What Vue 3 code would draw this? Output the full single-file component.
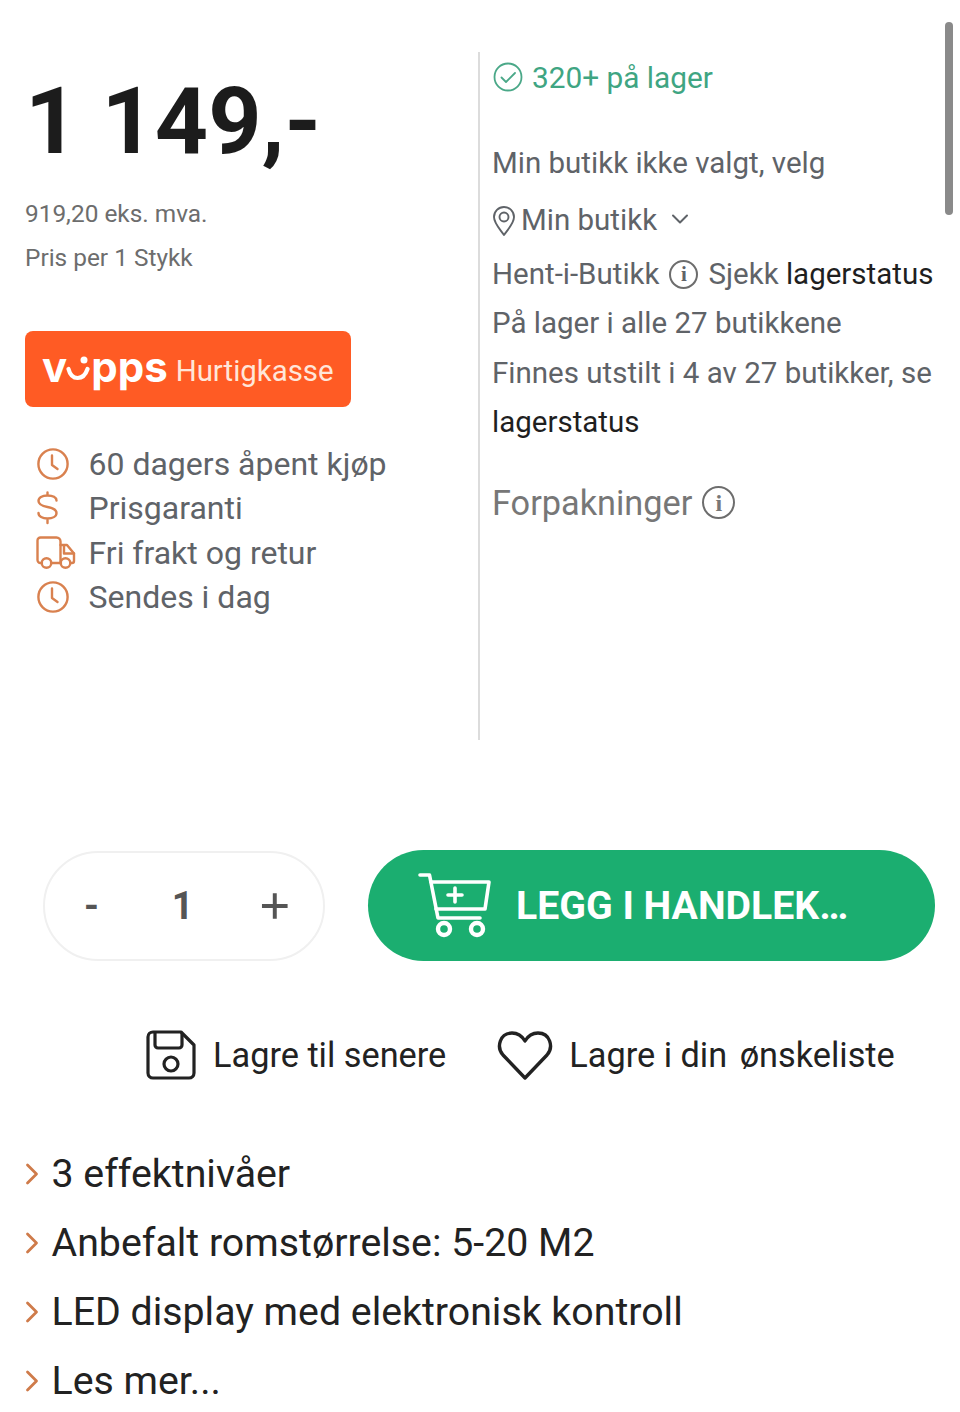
<template>
  <div class="page">
    <div class="scrollbar"></div>

    <section class="top">
      <div class="left">
        <div class="price">1 149,-</div>
        <p class="sub sub--first">919,20 eks. mva.</p>
        <p class="sub">Pris per 1 Stykk</p>

        <button class="vipps" type="button">
          <span class="vipps__logo">v<svg class="vipps__smile" viewBox="0 0 24 26" fill="none"><circle cx="18" cy="4" r="3.500" fill="#fff" /><path d="M2.500 13c3 12 15 12 19 0" stroke="#fff" stroke-width="4.200" stroke-linecap="round" /></svg>pps</span>
          <span class="vipps__text">Hurtigkasse</span>
        </button>

        <ul class="perks">
          <li v-for="perk in perks" :key="perk.label">
            <span class="perks__icon">
              <svg v-if="perk.icon === 'clock'" width="34" height="34" viewBox="0 0 34 34" fill="none" stroke="#d9814f" stroke-width="2.400" stroke-linecap="round" stroke-linejoin="round">
                <circle cx="17" cy="17" r="14.600" />
                <path d="M16 8.500v9.500l5.500 4" />
              </svg>
              <svg v-else-if="perk.icon === 'dollar'" width="34" height="34" viewBox="0 0 34 34" fill="none" stroke="#d9814f" stroke-width="2.400" stroke-linecap="round" stroke-linejoin="round">
                <path d="M20.500 9.500c0-3-3.500-5-9-5s-9 2-9 5.500c0 3.500 3.500 5 9 6 5.500 1 9 2.500 9 6 0 3.500-4 5.500-9 5.500s-9-2-9-5.500M11.500 1.500v3M11.500 27.500v4.500" />
              </svg>
              <svg v-else width="40" height="34" viewBox="0 0 40 34" fill="none" stroke="#d9814f" stroke-width="2.400" stroke-linecap="round" stroke-linejoin="round">
                <path d="M6 27H4.500A3 3 0 0 1 1.500 24V4.500A3 3 0 0 1 4.500 1.500h16A4 4 0 0 1 24.500 5.500V27H15" />
                <path d="M24.500 9h6.500l7 8.500V25a2 2 0 0 1-2 2h-1M24.500 27h.5" />
                <path d="M28 10v7.500h10" />
                <circle cx="10.500" cy="27" r="4.800" />
                <circle cx="29.500" cy="27" r="4.800" />
              </svg>
            </span>
            <span>{{ perk.label }}</span>
          </li>
        </ul>
      </div>

      <div class="right">
        <div class="stock">
          <svg width="30" height="30" viewBox="0 0 30 30" fill="none" stroke="#4aa888" stroke-width="1.800" stroke-linecap="round" stroke-linejoin="round">
            <circle cx="15" cy="15" r="13.500" />
            <path d="M8.500 15.500l4.500 4.500 9-9" />
          </svg>
          <span>320+ på lager</span>
        </div>

        <div class="info">
          <p class="info__first">Min butikk ikke valgt, velg</p>
          <p class="store">
            <svg width="24" height="32" viewBox="0 0 24 32" fill="none" stroke="#5f6368" stroke-width="1.900" stroke-linejoin="round">
              <path d="M12 30C7 23 2 18 2 12a10 10 0 0 1 20 0c0 6-5 11-10 18z" />
              <circle cx="12" cy="12" r="4.500" />
            </svg>
            <span>Min butikk</span>
            <svg class="store__chev" width="20" height="12" viewBox="0 0 20 12" fill="none" stroke="#5f6368" stroke-width="2" stroke-linecap="round" stroke-linejoin="round">
              <path d="M3 2.500l7 7 7-7" />
            </svg>
          </p>
          <p class="pickup">
            <span>Hent-i-Butikk</span>
            <span class="info-icon">i</span>
            <span>Sjekk <span class="dark">lagerstatus</span></span>
          </p>
          <p>På lager i alle 27 butikkene</p>
          <p>Finnes utstilt i 4 av 27 butikker, se</p>
          <p class="dark">lagerstatus</p>
        </div>

        <div class="packs">
          <span>Forpakninger</span>
          <span class="info-icon info-icon--big">i</span>
        </div>
      </div>
    </section>

    <section class="buy">
      <div class="qty">
        <span class="qty__minus">-</span>
        <span class="qty__value">1</span>
        <svg width="30" height="30" viewBox="0 0 30 30" stroke="#555" stroke-width="4">
          <path d="M15 2v26M2 15h26" />
        </svg>
      </div>
      <button class="add" type="button">
        <svg width="74" height="66" viewBox="0 0 74 66" fill="none" stroke="#fff" stroke-width="3.600" stroke-linecap="round" stroke-linejoin="round">
          <path d="M2 2h9.500l8.500 43h42" />
          <path d="M13 9h58l-4 27H18" />
          <path d="M37 15v14M30 22h14" />
          <circle cx="26" cy="56" r="6" stroke-width="4.400" />
          <circle cx="59" cy="56" r="6" stroke-width="4.400" />
        </svg>
        <span>LEGG I HANDLEK…</span>
      </button>
    </section>

    <section class="save">
      <div class="save__item">
        <svg width="50" height="50" viewBox="0 0 50 50" fill="none" stroke="#222" stroke-width="3.200" stroke-linejoin="round">
          <path d="M7 2h28l13 13v28a5 5 0 0 1-5 5H7a5 5 0 0 1-5-5V7a5 5 0 0 1 5-5z" />
          <path d="M9 2v13a3 3 0 0 0 3 3h21a3 3 0 0 0 3-3V3" />
          <circle cx="25" cy="34" r="7" />
        </svg>
        <span>Lagre til senere</span>
      </div>
      <div class="save__item save__item--wish">
        <svg width="56" height="50" viewBox="0 0 56 50" fill="none" stroke="#222" stroke-width="3.400" stroke-linejoin="round">
          <path d="M28 48L6 25C-1 17 3 3 15 3c6 0 10 3 13 8 3-5 7-8 13-8 12 0 16 14 9 22z" />
        </svg>
        <span>Lagre i din <span class="save__gap">ønskeliste</span></span>
      </div>
    </section>

    <ul class="features">
      <li v-for="item in features" :key="item">
        <svg width="14" height="22" viewBox="0 0 14 22" fill="none" stroke="#cf7b4a" stroke-width="2.800" stroke-linecap="round" stroke-linejoin="round">
          <path d="M2.500 2l9 9-9 9" />
        </svg>
        <span>{{ item }}</span>
      </li>
    </ul>
  </div>
</template>

<script setup>
const perks = [
  { icon: "clock", label: "60 dagers åpent kjøp" },
  { icon: "dollar", label: "Prisgaranti" },
  { icon: "truck", label: "Fri frakt og retur" },
  { icon: "clock", label: "Sendes i dag" }
];

const features = [
  "3 effektnivåer",
  "Anbefalt romstørrelse: 5-20 M2",
  "LED display med elektronisk kontroll",
  "Les mer..."
];
</script>

<style>
html,
body {
  margin: 0;
  background: #fff;
}
</style>

<style scoped>
.page {
  position: relative;
  width: 960px;
  height: 1412px;
  overflow: hidden;
  background: #fff;
  font-family: Roboto, "Liberation Sans", sans-serif;
  color: #5f6368;
}

.scrollbar {
  position: absolute;
  top: 22px;
  left: 945px;
  width: 8px;
  height: 193px;
  border-radius: 4px;
  background: #8a8a8a;
}

p {
  margin: 0;
}

.top {
  display: flex;
  padding-top: 52px;
  height: 688px;
}

.left {
  box-sizing: border-box;
  width: 478px;
  padding-left: 25px;
}

.price {
  margin-top: 14px;
  font-size: 93px;
  line-height: 112px;
  font-weight: 700;
  color: #1c1c1c;
}

.sub {
  font-size: 24.400px;
  line-height: 44px;
  color: #6d6d6d;
}

.sub--first {
  margin-top: 14px;
}

.vipps {
  display: flex;
  align-items: center;
  gap: 8px;
  box-sizing: border-box;
  width: 326px;
  height: 76px;
  margin-top: 51px;
  padding: 0 0 0 17px;
  border: none;
  border-radius: 8px;
  background: #ff5b24;
  color: #fff;
  font-family: inherit;
}

.vipps__logo {
  display: flex;
  align-items: baseline;
  margin-bottom: 4px;
  font-family: Inter, Roboto, sans-serif;
  font-size: 42px;
  font-weight: 700;
  line-height: 1;
}

.vipps__smile {
  width: 24px;
  height: 26px;
  margin: 0 1px -2px -1px;
}

.vipps__text {
  margin-top: 4px;
  font-size: 29.400px;
  color: #ffe6d9;
}

.perks {
  margin: 35px 0 0 11px;
  padding: 0;
  list-style: none;
  font-size: 32px;
}

.perks li {
  display: flex;
  align-items: center;
  height: 44.300px;
}

.perks__icon {
  display: flex;
  align-items: center;
  width: 52.500px;
}

.right {
  flex: 1;
  padding-left: 12px;
  border-left: 2px solid #dcdcdc;
  font-size: 29.500px;
}

.stock {
  display: flex;
  align-items: center;
  gap: 9px;
  height: 50px;
  padding-left: 1px;
  font-size: 29.800px;
  color: #3fa582;
}

.info {
  margin-top: 36px;
  line-height: 49.500px;
}

.info__first {
  line-height: 50px;
}

.store {
  display: flex;
  align-items: center;
  gap: 5px;
  margin-top: 8px;
}

.store__chev {
  margin-left: 8px;
  margin-top: -4px;
}

.pickup {
  display: flex;
  align-items: center;
  gap: 10px;
  margin-top: 4px;
}

.dark {
  color: #1f1f1f;
}

.info-icon {
  display: inline-flex;
  align-items: center;
  justify-content: center;
  box-sizing: border-box;
  width: 29px;
  height: 29px;
  border: 2px solid #6d6d6d;
  border-radius: 50%;
  font-family: "Liberation Serif", serif;
  font-size: 21px;
  font-weight: 700;
  line-height: 1;
}

.info-icon--big {
  width: 33px;
  height: 33px;
  font-size: 24px;
}

.packs {
  display: flex;
  align-items: center;
  gap: 10px;
  margin-top: 35px;
  font-size: 34.300px;
  color: #777;
}

.buy {
  display: flex;
  align-items: center;
  gap: 43px;
  margin-top: 110px;
  padding-left: 43px;
}

.qty {
  display: flex;
  align-items: center;
  box-sizing: border-box;
  width: 282px;
  height: 110px;
  padding: 0 33px 0 39px;
  border: 2px solid #f0f0f0;
  border-radius: 55px;
  color: #555;
  font-size: 38px;
  font-weight: 700;
}

.qty__minus {
  width: 89px;
}

.qty__value {
  width: 90px;
}

.add {
  display: flex;
  align-items: center;
  gap: 24px;
  box-sizing: border-box;
  width: 567px;
  height: 111px;
  padding: 0 0 0 50px;
  border: none;
  border-radius: 56px;
  background: #1bae70;
  color: #fff;
  font-family: inherit;
  font-size: 39.200px;
  font-weight: 700;
}

.save {
  display: flex;
  align-items: center;
  margin-top: 69px;
  padding-left: 146px;
  font-size: 34.300px;
  color: #222;
}

.save__item {
  display: flex;
  align-items: center;
  gap: 17px;
}

.save__item--wish {
  margin-left: 51px;
  gap: 16px;
}

.save__gap {
  margin-left: 4px;
}

.features {
  margin: 59px 0 0;
  padding: 0 0 0 25px;
  list-style: none;
  font-size: 39.300px;
  color: #222;
}

.features li {
  display: flex;
  align-items: center;
  gap: 12.500px;
  height: 69px;
}
</style>
